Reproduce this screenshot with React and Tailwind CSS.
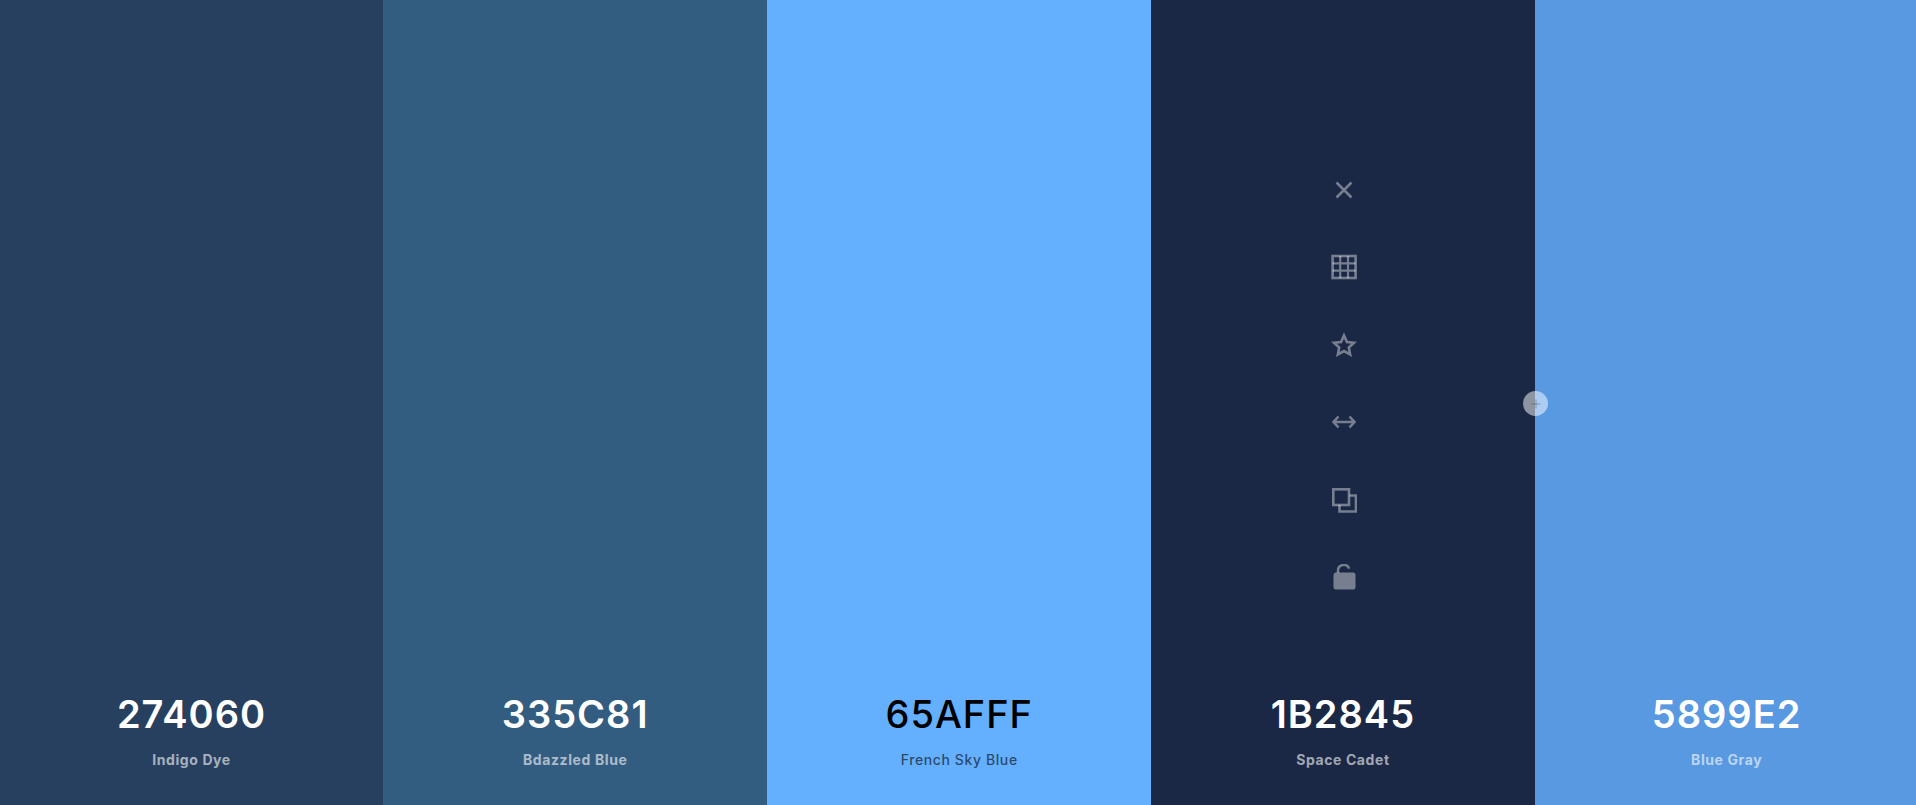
import { Plus } from 'lucide-react';

const colors = [
  { hex: '274060', name: 'Indigo Dye', bg: 'bg-[#274060] w-[383px]', code: 'text-white font-semibold', label: 'text-white/60 font-bold' },
  { hex: '335C81', name: 'Bdazzled Blue', bg: 'bg-[#335c81] w-[384.4px]', code: 'text-white font-semibold', label: 'text-white/60 font-bold' },
  { hex: '65AFFF', name: 'French Sky Blue', bg: 'bg-[#65afff] w-[383.7px]', code: 'text-black font-medium', label: 'text-black/60 font-medium' },
  { hex: '1B2845', name: 'Space Cadet', bg: 'bg-[#1b2845] w-[383.7px]', code: 'text-white font-semibold', label: 'text-white/60 font-bold' },
  { hex: '5899E2', name: 'Blue Gray', bg: 'bg-[#5899e2] w-[383.7px]', code: 'text-white font-semibold', label: 'text-white/60 font-bold' },
];

function Icon({ children }) {
  return (
    <svg width="26" height="26" viewBox="0 0 26 26" fill="none" stroke="currentColor" strokeWidth="2.6">
      {children}
    </svg>
  );
}

function ColorTools() {
  return (
    <div className="flex flex-col items-center gap-[51.6px] text-white/40">
      <Icon>
        <path d="M5.5 5.5l15 15M20.5 5.5l-15 15" strokeWidth="2.6" />
      </Icon>
      <Icon>
        <rect x="1.6" y="2" width="23" height="22" />
        <path d="M9.2 2v22M17 2v22M1.6 9.3h23M1.6 16.7h23" strokeWidth="2.2" />
      </Icon>
      <Icon>
        <path d="M13 3.5l2.94 6.45 7.06.81-5.24 4.79L19.17 22.5 13 19l-6.17 3.5 1.41-6.95L3 10.76l7.06-.81z" />
      </Icon>
      <Icon>
        <path d="M2.5 13h21M7.5 7.5L2.5 13l5 5.5M18.5 7.5l5 5.5-5 5.5" />
      </Icon>
      <Icon>
        <rect x="2.3" y="2.3" width="15.7" height="15.7" />
        <path d="M18.5 8.5H25V24.5H8.5V18" />
      </Icon>
      <Icon>
        <rect x="2.5" y="8.5" width="22" height="17" rx="2.5" fill="currentColor" stroke="none" />
        <path d="M7 9V6.8a5.8 5.8 0 0 1 11.2-2.2" strokeWidth="2.5" />
      </Icon>
    </div>
  );
}

export default function App() {
  return (
    <div className="relative flex h-[805px] w-full overflow-hidden font-['Inter',sans-serif]">
      {colors.map((color) => (
        <div key={color.hex} className={`relative flex shrink-0 flex-col items-center justify-end pb-[35px] ${color.bg}`}>
          {color.hex === '1B2845' && (
            <div className="absolute left-[179.5px] top-[176.5px]"><ColorTools /></div>
          )}
          <div className={`text-[38px] leading-[46px] tracking-[1px] ${color.code}`}>{color.hex}</div>
          <div className={`mt-[13px] text-[14px] leading-[20px] tracking-[0.6px] ${color.label}`}>{color.name}</div>
        </div>
      ))}
      <div className="absolute left-[1523px] top-[391px] flex h-[25px] w-[25px] items-center justify-center rounded-full bg-white/50 text-black/30">
        <Plus size={14} strokeWidth={1.5} />
      </div>
    </div>
  );
}
